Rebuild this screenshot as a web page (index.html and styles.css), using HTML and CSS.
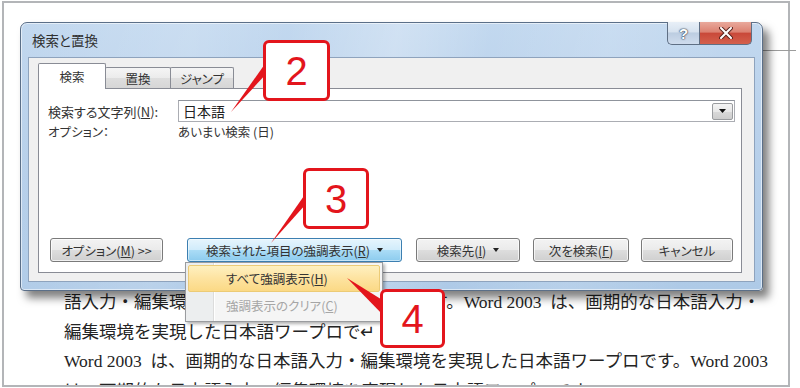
FILE: index.html
```html
<!DOCTYPE html>
<html lang="ja">
<head>
<meta charset="utf-8">
<title>検索と置換</title>
<link rel="stylesheet" href="styles.css">
</head>
<body>
<div class="screen">
  <div class="page">
    <p class="doc">語入力・編集環境を実現した日本語ワープロです。Word 2003&nbsp; は、画期的な日本語入力・<br>編集環境を実現した日本語ワープロで↵<br>Word 2003&nbsp; は、画期的な日本語入力・編集環境を実現した日本語ワープロです。Word 2003<br>は、画期的な日本語入力・編集環境を実現した日本語ワープロです。</p>
  </div>
  <span class="crop-mark"></span>

  <div class="dialog">
    <div class="titlebar">
      <span class="title">検索と置換</span>
      <div class="caption">
        <span class="cap help">?</span>
        <span class="cap close">
          <svg width="14" height="12" viewBox="0 0 14 12"><path d="M2 1 L12 11 M12 1 L2 11" stroke="#5a2620" stroke-width="4" stroke-linecap="round"/><path d="M2 1 L12 11 M12 1 L2 11" stroke="#ffffff" stroke-width="2" stroke-linecap="round"/></svg>
        </span>
      </div>
    </div>
    <div class="client">
      <div class="tabs">
        <span class="tab active t1">検索</span>
        <span class="tab t2">置換</span>
        <span class="tab t3">ジャンプ</span>
      </div>
      <div class="panel">
        <div class="row find">
          <span class="lbl">検索する文字列(<u>N</u>):</span>
          <div class="combo">
            <span class="val">日本語</span>
            <span class="drop"><svg width="7" height="4" viewBox="0 0 7 4"><path d="M0 0 H7 L3.5 4 Z" fill="#111"/></svg></span>
          </div>
        </div>
        <div class="row opts">
          <span class="lbl">オプション：</span>
          <span>あいまい検索 (日)</span>
        </div>
        <div class="buttons">
          <span class="btn b1">オプション(<u>M</u>) &gt;&gt;</span>
          <span class="btn b2 pressed">検索された項目の強調表示(<u>R</u>)<i class="arrow"></i></span>
          <span class="btn b3">検索先(<u>I</u>)<i class="arrow"></i></span>
          <span class="btn b4">次を検索(<u>F</u>)</span>
          <span class="btn b5">キャンセル</span>
        </div>
      </div>
    </div>
  </div>

  <div class="menu">
    <div class="item hl">すべて強調表示(<u>H</u>)</div>
    <div class="item disabled">強調表示のクリア(<u>C</u>)</div>
  </div>

  <svg class="pointers" width="800" height="388" viewBox="0 0 800 388">
    <polygon points="231,112 267,61 267,73" fill="#e3151c"/>
    <polygon points="271,243 306,193 306,204" fill="#e3151c"/>
    <polygon points="347,278 384,301 384,316" fill="#e3151c"/>
  </svg>

  <div class="callout c2">2</div>
  <div class="callout c3">3</div>
  <div class="callout c4">4</div>
</div>
</body>
</html>
```

FILE: styles.css
```css
* { box-sizing: border-box; margin: 0; padding: 0; }

html, body {
  width: 800px;
  height: 388px;
  overflow: hidden;
  background: #fff;
}

body {
  font-family: "Noto Sans CJK JP", sans-serif;
  color: #2a2a2a;
}

.screen {
  position: relative;
  width: 800px;
  height: 388px;
  overflow: hidden;
  background: #fff;
}

/* document page behind the dialog */
.page {
  margin: 1px 0 0 2px;
  width: 788px;
  height: 386px;
  border: 2px solid #b3b5b8;
  padding: 285px 0 0 60px;
  overflow: hidden;
}

.doc {
  font-family: "Liberation Serif", "Noto Sans CJK JP", serif;
  font-size: 17.5px;
  line-height: 29.5px;
  color: #242424;
  white-space: nowrap;
}

.crop-mark {
  position: absolute;
  left: 762px;
  top: 50px;
  width: 34px;
  height: 1px;
  background: #9c9c9c;
}

/* dialog window */
.dialog {
  position: absolute;
  left: 20px;
  top: 22px;
  width: 743px;
  height: 269px;
  border: 1px solid #5b6f88;
  border-radius: 7px 7px 4px 4px;
  background:
    linear-gradient(100deg,
      rgba(255,255,255,0) 0%,
      rgba(255,255,255,.15) 22%,
      rgba(255,255,255,0) 34%,
      rgba(255,255,255,.25) 48%,
      rgba(255,255,255,0) 60%,
      rgba(255,255,255,.12) 75%,
      rgba(255,255,255,0) 90%),
    linear-gradient(180deg, #c2d8ef 0%, #b9d1eb 40%, #aecae7 100%);
  box-shadow: 6px 7px 9px rgba(0,0,0,.5), inset 0 0 0 1px rgba(255,255,255,.55);
  padding: 0 7px 8px 7px;
  display: flex;
  flex-direction: column;
}

.titlebar {
  height: 34px;
  display: flex;
  align-items: center;
  justify-content: space-between;
  padding-left: 4px;
}

.title {
  font-size: 13.5px;
  color: #303030;
  font-feature-settings: "palt";
}

.caption {
  align-self: flex-start;
  margin-top: -1px;
  margin-right: 3px;
  display: flex;
}

.cap {
  height: 23px;
  display: flex;
  align-items: center;
  justify-content: center;
  border: 1px solid #5f6f84;
  border-top: none;
}

.help {
  width: 32px;
  border-radius: 0 0 0 5px;
  border-right: none;
  background: linear-gradient(180deg, #e8eff7 0%, #d6e2ef 45%, #bccde1 50%, #cfdced 100%);
  font-family: "Liberation Sans", sans-serif;
  font-weight: bold;
  font-size: 15px;
  color: #fff;
  text-shadow: 0 0 1px #39485c, 0 0 1px #39485c, 0 0 2px #39485c;
}

.close {
  width: 53px;
  border-radius: 0 0 5px 0;
  background: linear-gradient(180deg, #e9a99c 0%, #dc8272 45%, #c9493a 52%, #d4604c 100%);
}

.client {
  flex: 1;
  background: #f0f0f0;
  border: 1px solid #8ea3bd;
  padding: 5px 12px 8px 9px;
  display: flex;
  flex-direction: column;
}

.tabs {
  height: 25px;
  display: flex;
  align-items: flex-end;
  position: relative;
  z-index: 1;
}

.tab {
  height: 21px;
  border: 1px solid #898c95;
  border-bottom: none;
  border-radius: 2px 2px 0 0;
  background: linear-gradient(180deg, #f5f5f5 0%, #ebebeb 50%, #dedede 51%, #d6d6d6 100%);
  display: flex;
  align-items: center;
  justify-content: center;
  font-size: 12.5px;
  color: #333;
  font-feature-settings: "palt";
  margin-right: -1px;
}

.tab.active {
  height: 26px;
  margin-bottom: -1px;
  background: #fff;
  position: relative;
  z-index: 2;
}

.t1 { width: 68px; }
.t2 { width: 66px; }
.t3 { width: 64px; }

.panel {
  height: 185px;
  background: #fff;
  border: 1px solid #898c95;
  padding: 0 6px 10px 9px;
  display: flex;
  flex-direction: column;
}

.row {
  display: flex;
  align-items: center;
  font-size: 12.5px;
  color: #333;
  font-feature-settings: "palt";
}

.row .lbl {
  flex: 0 0 130px;
}

.find {
  margin-top: 11px;
  height: 22px;
}

.find .lbl { font-size: 13px; }

.opts {
  height: 17px;
  margin-top: 1px;
}

.combo {
  flex: 1;
  height: 22px;
  border: 1px solid #abadb3;
  border-top-color: #8f949c;
  background: #fff;
  display: flex;
  align-items: center;
  justify-content: space-between;
  padding-left: 4px;
}

.val {
  font-size: 14px;
  color: #222;
}

.drop {
  width: 21px;
  height: 17px;
  margin-right: 1px;
  border: 1px solid #9a9c9f;
  border-radius: 2px;
  background: linear-gradient(180deg, #f4f4f4 0%, #e8e8e8 50%, #d9d9d9 51%, #cdcdcd 100%);
  display: flex;
  align-items: center;
  justify-content: center;
}

.buttons {
  margin-top: auto;
  display: flex;
  height: 24px;
}

.btn {
  height: 24px;
  border: 1px solid #7a7a7a;
  border-radius: 3px;
  background: linear-gradient(180deg, #f3f3f3 0%, #ebebeb 48%, #dddddd 52%, #cfcfcf 100%);
  box-shadow: inset 0 0 0 1px rgba(255,255,255,.7);
  display: flex;
  align-items: center;
  justify-content: center;
  font-size: 12.5px;
  color: #333;
  font-feature-settings: "palt";
  white-space: nowrap;
}

.btn.pressed {
  border-color: #3c7fb1;
  background: linear-gradient(180deg, #e6f5fd 0%, #d1ecfb 48%, #aadcf6 52%, #8ccbee 100%);
  box-shadow: inset 0 0 0 1px rgba(255,255,255,.5);
}

.arrow {
  display: inline-block;
  width: 0;
  height: 0;
  margin-left: 7px;
  border-left: 3px solid transparent;
  border-right: 3px solid transparent;
  border-top: 4px solid #222;
}

.b1 { width: 113px; margin-left: 2px; }
.b2 { width: 215px; margin-left: 24px; }
.b3 { width: 104px; margin-left: 14px; }
.b4 { width: 96px; margin-left: 13px; }
.b5 { width: 92px; margin-left: 12px; }

/* dropdown menu */
.menu {
  position: absolute;
  left: 185px;
  top: 262px;
  width: 198px;
  height: 60px;
  border: 1px solid #9a9c9f;
  background: linear-gradient(90deg, #eceeef 0 27px, #dcdcdc 27px 28px, #ffffff 28px 29px, #f5f5f5 29px);
  box-shadow: 2px 2px 3px rgba(0,0,0,.3);
  padding: 2px;
}

.item {
  height: 27px;
  display: flex;
  align-items: center;
  padding-left: 37px;
  font-size: 12.5px;
  color: #333;
  font-feature-settings: "palt";
  border: 1px solid transparent;
  border-radius: 2px;
}

.item.hl {
  background: linear-gradient(180deg, #fef0c0 0%, #fde3a0 50%, #fbd985 100%);
  border-color: #eccb76;
}

.item.disabled {
  color: #a6a6a6;
}

/* callouts */
.pointers {
  position: absolute;
  left: 0;
  top: 0;
  pointer-events: none;
}

.callout {
  position: absolute;
  background: #fff;
  border: 3px solid #e3151c;
  border-radius: 6px;
  font-family: "Liberation Sans", sans-serif;
  font-size: 40px;
  line-height: 1;
  color: #e3151c;
  display: flex;
  align-items: center;
  justify-content: center;
}

.c2 { left: 263px; top: 40px; width: 67px; height: 61px; }
.c3 { left: 303px; top: 168px; width: 66px; height: 61px; }
.c4 { left: 380px; top: 289px; width: 65px; height: 59px; }
```
